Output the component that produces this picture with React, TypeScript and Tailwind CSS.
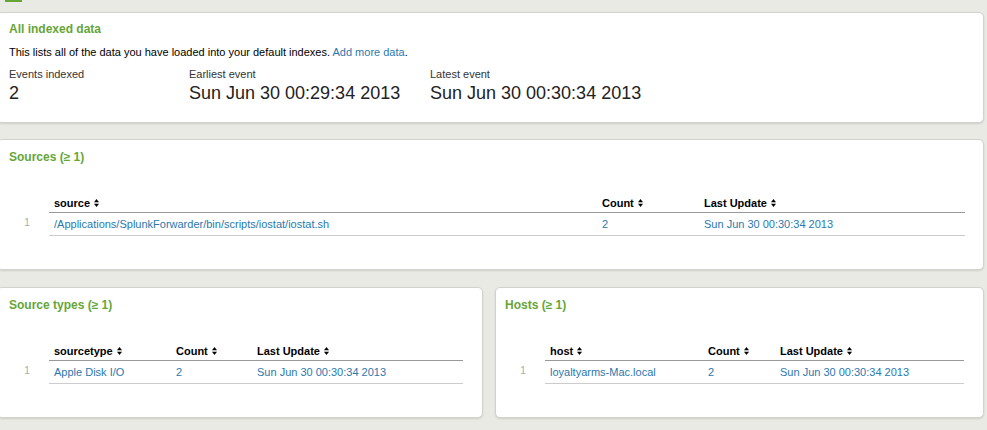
import React from 'react';

const SortIcon = () => (
  <svg className="ml-[4px] inline-block" width="5" height="8" viewBox="0 0 5 8" fill="currentColor">
    <polygon points="0,3.3 2.5,0 5,3.3" />
    <polygon points="0,4.7 5,4.7 2.5,8" />
  </svg>
);

type TableProps = {
  columns: { label: string; width?: string }[];
  row: string[];
};

const DataTable = ({ columns, row }: TableProps) => (
  <table className="mt-[31px] w-full table-fixed border-collapse text-[11px] leading-[14px]">
    <thead>
      <tr>
        <th className="w-[40px]" />
        {columns.map((c) => (
          <th
            key={c.label}
            className={`${c.width ?? ''} border-b border-[#999] pb-[2px] pl-[5px] text-left font-bold text-black`}
          >
            <span className="inline-flex items-center">
              {c.label}
              <SortIcon />
            </span>
          </th>
        ))}
      </tr>
    </thead>
    <tbody>
      <tr>
        <td className="w-[40px] pr-[4px] pb-[2px] text-center text-[10px] text-[#aaa]">1</td>
        {row.map((v, i) => (
          <td key={i} className="border-b border-[#ccc] py-[4px] pl-[5px] text-[#2a78b0]">
            {v}
          </td>
        ))}
      </tr>
    </tbody>
  </table>
);

const Panel = ({
  title,
  children,
  className,
  titleTop = 'pt-[9px]',
}: {
  title: string;
  children: React.ReactNode;
  className?: string;
  titleTop?: string;
}) => (
  <div
    className={`rounded-[5px] border border-[#d3d3ce] bg-white shadow-[0_1px_2px_rgba(0,0,0,0.12)] ${className ?? ''}`}
  >
    <h3 className={`${titleTop} text-[12px] font-bold leading-[16px] text-[#65a637]`}>{title}</h3>
    {children}
  </div>
);

const App = () => {
  return (
    <div className="min-h-[430px] overflow-hidden bg-[#eaeae5] pr-[3px] font-['Liberation_Sans',Arial,sans-serif] text-[#333]">
      <div className="ml-[5px] h-[2px] w-[17px] bg-[#65a637]" />

      <Panel
        title="All indexed data"
        titleTop="pt-[8px]"
        className="-ml-[3px] mt-[10px] h-[111px] pl-[11px] pr-[19px]"
      >
        <p className="mt-[8px] text-[11px] leading-[14px] text-black">
          This lists all of the data you have loaded into your default indexes.{' '}
          <a className="text-[#2a78b0]">Add more data</a>.
        </p>
        <div className="mt-[8px] flex">
          <div className="w-[180px]">
            <div className="text-[11px] leading-[14px]">Events indexed</div>
            <div className="mt-[2px] text-[18px] leading-[20px] text-[#222]">2</div>
          </div>
          <div className="w-[241px]">
            <div className="text-[11px] leading-[14px]">Earliest event</div>
            <div className="mt-[2px] text-[18px] leading-[20px] text-[#222]">Sun Jun 30 00:29:34 2013</div>
          </div>
          <div>
            <div className="text-[11px] leading-[14px]">Latest event</div>
            <div className="mt-[2px] text-[18px] leading-[20px] text-[#222]">Sun Jun 30 00:30:34 2013</div>
          </div>
        </div>
      </Panel>

      <Panel title="Sources (≥ 1)" className="-ml-[3px] mt-[16px] h-[131px] pl-[11px] pr-[18px]">
        <DataTable
          columns={[{ label: 'source', width: 'w-[548px]' }, { label: 'Count', width: 'w-[102px]' }, { label: 'Last Update' }]}
          row={['/Applications/SplunkForwarder/bin/scripts/iostat/iostat.sh', '2', 'Sun Jun 30 00:30:34 2013']}
        />
      </Panel>

      <div className="-ml-[3px] mt-[17px] flex gap-[12px]">
        <Panel title="Source types (≥ 1)" className="h-[131px] w-[486px] shrink-0 pl-[11px] pr-[19px]">
          <DataTable
            columns={[{ label: 'sourcetype', width: 'w-[122px]' }, { label: 'Count', width: 'w-[81px]' }, { label: 'Last Update' }]}
            row={['Apple Disk I/O', '2', 'Sun Jun 30 00:30:34 2013']}
          />
        </Panel>
        <Panel title="Hosts (≥ 1)" className="h-[131px] flex-1 pl-[9px] pr-[19px]">
          <DataTable
            columns={[{ label: 'host', width: 'w-[158px]' }, { label: 'Count', width: 'w-[72px]' }, { label: 'Last Update' }]}
            row={['loyaltyarms-Mac.local', '2', 'Sun Jun 30 00:30:34 2013']}
          />
        </Panel>
      </div>
    </div>
  );
};

export default App;
